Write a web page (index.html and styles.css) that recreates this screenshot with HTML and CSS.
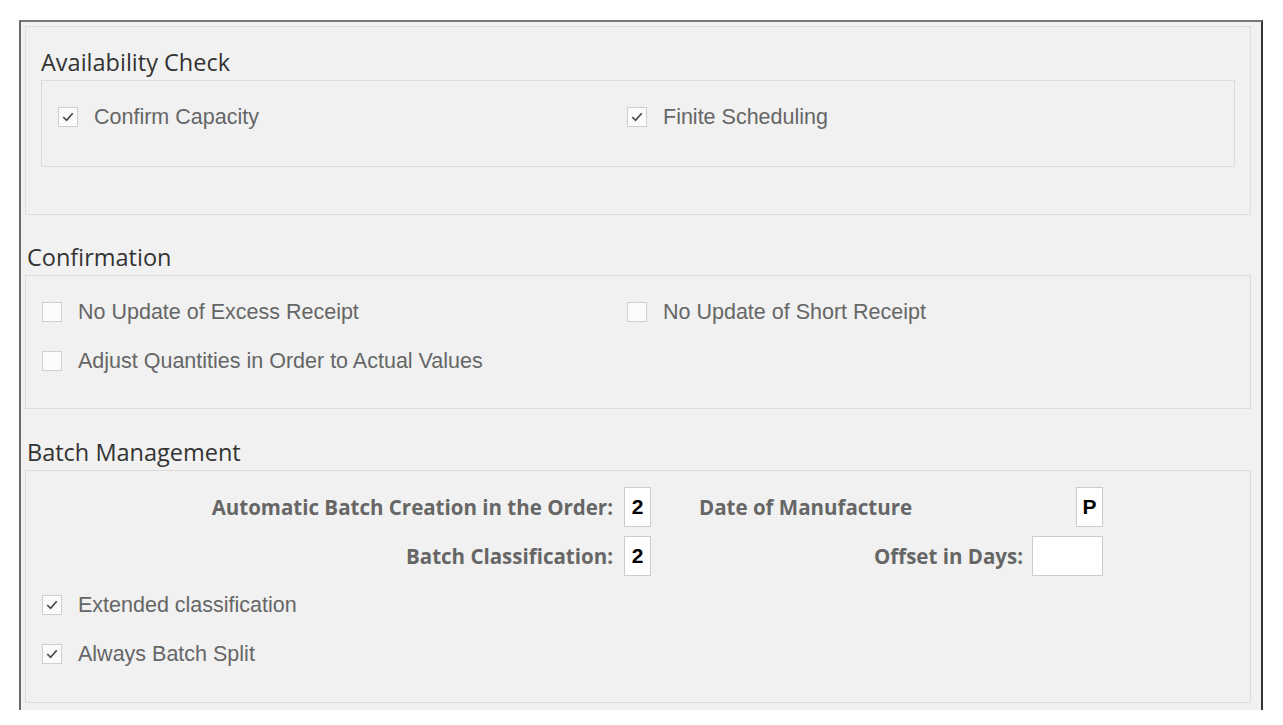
FILE: index.html
```html
<!DOCTYPE html>
<html lang="en">
  <head>
    <meta charset="utf-8">
    <title>Order Type Settings</title>
    <link rel="stylesheet" href="styles.css">
  </head>
  <body>
    <div class="frame">
      <div class="panel">
        <div class="title">Availability Check</div>
        <div class="box box-avail">
          <div class="check-grid cols-avail">
            <label class="check"><span class="cb on"><svg viewBox="0 0 19 19"><path d="M4.5 9.5 L8 13 L14.5 5.5"/></svg></span>Confirm Capacity</label>
            <label class="check"><span class="cb on"><svg viewBox="0 0 19 19"><path d="M4.5 9.5 L8 13 L14.5 5.5"/></svg></span>Finite Scheduling</label>
          </div>
        </div>
      </div>

      <div class="title title-confirm">Confirmation</div>
      <div class="box box-confirm">
        <div class="check-grid cols-wide">
          <label class="check"><span class="cb"></span>No Update of Excess Receipt</label>
          <label class="check"><span class="cb"></span>No Update of Short Receipt</label>
          <label class="check"><span class="cb"></span>Adjust Quantities in Order to Actual Values</label>
        </div>
      </div>

      <div class="title title-batch">Batch Management</div>
      <div class="box box-batch">
        <div class="form-grid">
          <div class="flabel">Automatic Batch Creation in the Order:</div>
          <div class="field small">2</div>
          <div class="flabel left">Date of Manufacture</div>
          <div class="field small end">P</div>
          <div class="flabel">Batch Classification:</div>
          <div class="field small">2</div>
          <div class="flabel tight">Offset in Days:</div>
          <div class="field wide"></div>
        </div>
        <div class="check-list">
          <label class="check"><span class="cb on"><svg viewBox="0 0 19 19"><path d="M4.5 9.5 L8 13 L14.5 5.5"/></svg></span>Extended classification</label>
          <label class="check"><span class="cb on"><svg viewBox="0 0 19 19"><path d="M4.5 9.5 L8 13 L14.5 5.5"/></svg></span>Always Batch Split</label>
        </div>
      </div>
    </div>
  </body>
</html>
```

FILE: styles.css
```css
* {
  box-sizing: border-box;
}

body {
  margin: 0;
  padding: 20px 0 0 19px;
  background: #ffffff;
  font-family: "Open Sans", sans-serif;
}

.frame {
  width: 1244px;
  height: 690px;
  background: #f1f1f1;
  border-top: 2px solid #777777;
  border-left: 2px solid #6a6a6a;
  border-right: 2px solid #333333;
  padding: 4px 10px 0 4px;
}

.panel {
  height: 189px;
  border: 1px solid #dedede;
  padding: 20px 15px 0 15px;
}

.title {
  font-size: 23.5px;
  line-height: 30px;
  color: #333333;
  margin-bottom: 3px;
}

.title-confirm {
  margin-top: 27px;
  padding-left: 2px;
}

.title-batch {
  margin-top: 28px;
  padding-left: 2px;
}

.box {
  border: 1px solid #dcdcdc;
  padding: 16px 16px 0 16px;
}

.box-avail {
  height: 87px;
}

.box-confirm {
  height: 134px;
}

.box-batch {
  height: 233px;
  padding-left: 0;
}

.check-grid {
  display: grid;
  row-gap: 9px;
}

.cols-avail {
  grid-template-columns: 569px 1fr;
}

.cols-wide {
  grid-template-columns: 585px 1fr;
}

.check {
  display: flex;
  align-items: center;
  height: 40px;
  font-family: "Liberation Sans", Arial, sans-serif;
  font-size: 21.5px;
  color: #666666;
}

.cb {
  width: 20px;
  height: 20px;
  border: 1px solid #cfcfcf;
  background: #fbfbfb;
  margin-right: 16px;
  flex: none;
}

.cb svg {
  display: block;
  width: 18px;
  height: 18px;
}

.cb path {
  fill: none;
  stroke: #4a4a4a;
  stroke-width: 1.8;
}

.form-grid {
  display: grid;
  grid-template-columns: 598px 75px 333px 71px;
  grid-auto-rows: 40px;
  row-gap: 9px;
  align-items: center;
}

.flabel {
  text-align: right;
  padding-right: 11px;
  font-weight: bold;
  font-size: 20.5px;
  color: #666666;
}

.flabel.left {
  text-align: left;
}

.flabel.tight {
  padding-right: 9px;
}

.field {
  height: 40px;
  background: #ffffff;
  border: 1px solid #cccccc;
  font-family: "Liberation Sans", Arial, sans-serif;
  font-weight: bold;
  font-size: 21px;
  color: #000000;
  display: flex;
  align-items: center;
  justify-content: center;
}

.field.small {
  width: 27px;
}

.field.end {
  justify-self: end;
}

.field.wide {
  width: 71px;
}

.check-list {
  display: flex;
  flex-direction: column;
  gap: 9px;
  margin-top: 9px;
  padding-left: 16px;
}
```
